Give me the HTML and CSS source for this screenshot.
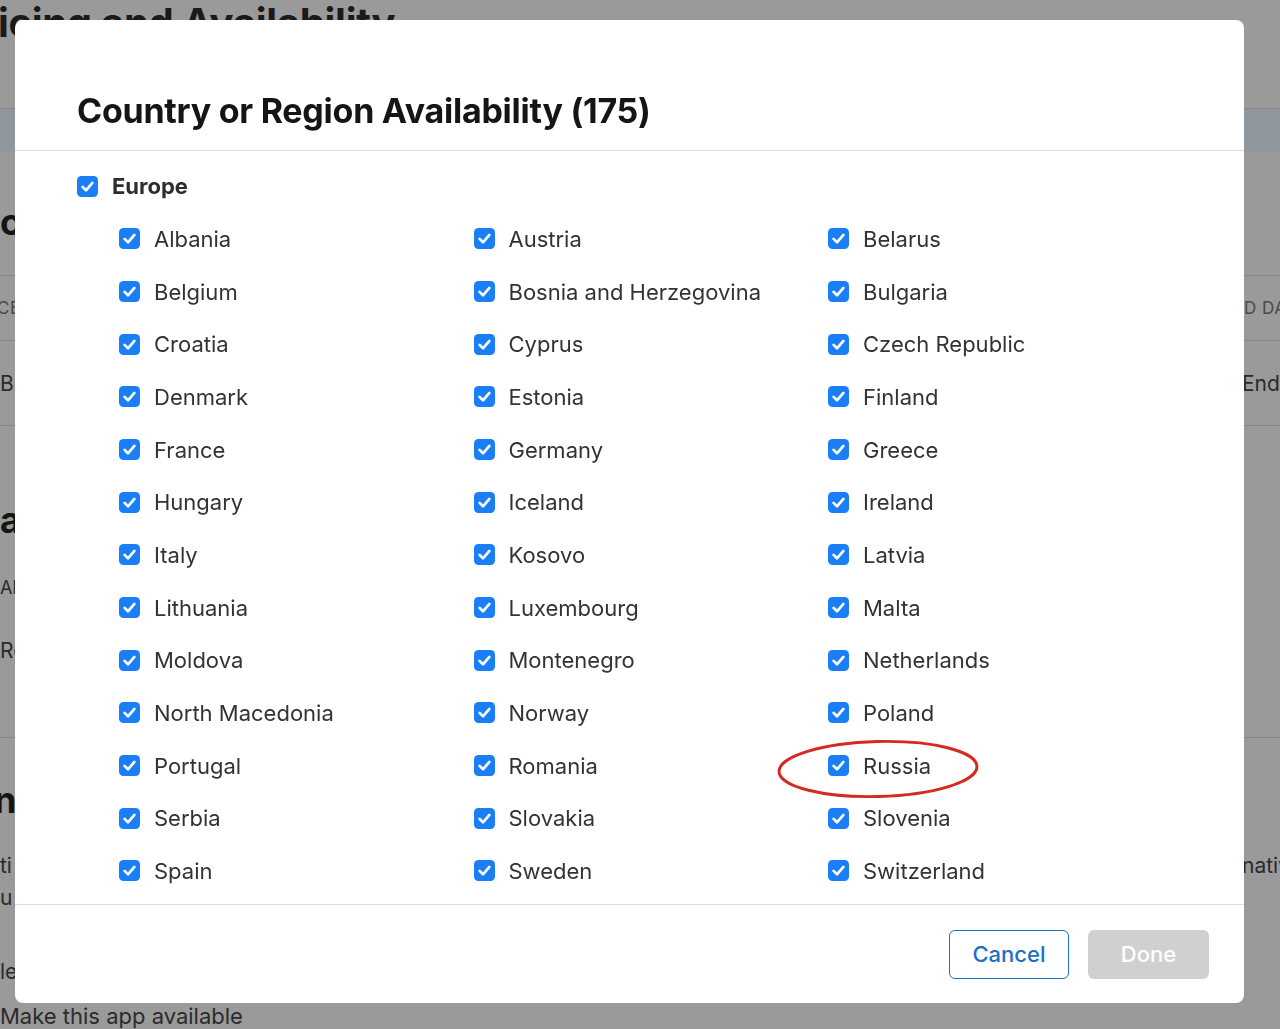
FILE: index.html
```html
<!DOCTYPE html>
<html lang="en">
<head>
<meta charset="utf-8">
<title>Country or Region Availability</title>
<link rel="stylesheet" href="styles.css">
</head>
<body>
<div class="bg">
  <div class="bg-title">Pricing and Availability</div>
  <div class="bg-gap g68"></div>
  <div class="bg-rule"></div>
  <div class="bg-band"></div>
  <div class="bg-gap g48"></div>
  <div class="bg-row h44 heading"><span class="l">ce Schedule</span></div>
  <div class="bg-gap g31"></div>
  <div class="bg-rule"></div>
  <div class="bg-row h64 caps"><span class="l shift">ICE</span><span class="r">D DATE</span></div>
  <div class="bg-rule"></div>
  <div class="bg-row h84"><span class="l">B</span><span class="r">End</span></div>
  <div class="bg-rule"></div>
  <div class="bg-gap g72"></div>
  <div class="bg-row h44 heading"><span class="l">ability</span></div>
  <div class="bg-gap g28"></div>
  <div class="bg-row h34 small"><span class="l">All</span></div>
  <div class="bg-gap g29"></div>
  <div class="bg-row h34"><span class="l">Re</span></div>
  <div class="bg-gap g70"></div>
  <div class="bg-rule"></div>
  <div class="bg-gap g40"></div>
  <div class="bg-row h44 heading"><span class="l shift2">ne</span></div>
  <div class="bg-gap g27"></div>
  <div class="bg-row h32"><span class="l">ti</span><span class="r">nativ</span></div>
  <div class="bg-row h32"><span class="l">u</span></div>
  <div class="bg-gap g42"></div>
  <div class="bg-row h32"><span class="l">le</span></div>
  <div class="bg-gap g15"></div>
  <div class="bg-row h28 make"><span class="l">Make this app available</span></div>
</div>

<div class="modal">
  <div class="modal-header">
    <h1 class="modal-title">Country or Region Availability (175)</h1>
  </div>
  <div class="modal-body">
    <label class="region">
      <svg class="cb" viewBox="0 0 21 21"><rect width="21" height="21" rx="4.5" fill="#1a7ff6"/><path d="M5.6 10.9 L9 14.3 L15.4 6.9" fill="none" stroke="#fff" stroke-width="2.7" stroke-linecap="round" stroke-linejoin="round"/></svg>
      <span>Europe</span>
    </label>
    <div class="countries" id="countries"></div>
  </div>
  <div class="modal-footer">
    <button class="btn btn-cancel">Cancel</button>
    <button class="btn btn-done">Done</button>
  </div>
</div>

<script>
  var names = ["Albania","Austria","Belarus","Belgium","Bosnia and Herzegovina","Bulgaria","Croatia","Cyprus","Czech Republic","Denmark","Estonia","Finland","France","Germany","Greece","Hungary","Iceland","Ireland","Italy","Kosovo","Latvia","Lithuania","Luxembourg","Malta","Moldova","Montenegro","Netherlands","North Macedonia","Norway","Poland","Portugal","Romania","Russia","Serbia","Slovakia","Slovenia","Spain","Sweden","Switzerland","Turkey","Ukraine","United Kingdom"];
  var box = '<svg class="cb" viewBox="0 0 21 21"><rect width="21" height="21" rx="4.5" fill="#1a7ff6"/><path d="M5.6 10.9 L9 14.3 L15.4 6.9" fill="none" stroke="#fff" stroke-width="2.7" stroke-linecap="round" stroke-linejoin="round"/></svg>';
  var ring = '<svg class="ring" viewBox="0 0 204 62"><ellipse cx="102" cy="31" rx="99" ry="27.5" transform="rotate(-1.5 102 31)" fill="none" stroke="#d42a1f" stroke-width="2.9"/></svg>';
  var html = "";
  names.forEach(function (n) {
    html += '<label class="country' + (n === "Russia" ? " marked" : "") + '">' + box + '<span>' + n + '</span>' + (n === "Russia" ? ring : "") + '</label>';
  });
  document.getElementById("countries").innerHTML = html;
</script>
</body>
</html>
```

FILE: styles.css
```css
html, body {
  margin: 0;
  padding: 0;
}
body {
  width: 1280px;
  height: 1029px;
  overflow: hidden;
  background: #9a9a9a;
  font-family: Inter, "Noto Sans", "Liberation Sans", sans-serif;
  color: #222;
}

/* dimmed page behind the sheet */
.bg {
  width: 1280px;
}
.bg-title {
  height: 40px;
  line-height: 46px;
  font-size: 40px;
  font-weight: 700;
  color: #1a1a1a;
  margin-left: -44px;
  white-space: nowrap;
  letter-spacing: -0.3px;
}
.bg-gap { width: 100%; }
.g68 { height: 68px; }
.g48 { height: 48px; }
.g31 { height: 31px; }
.g72 { height: 72px; }
.g28 { height: 28px; }
.g29 { height: 29px; }
.g70 { height: 70px; }
.g40 { height: 40px; }
.g27 { height: 27px; }
.g42 { height: 42px; }
.g15 { height: 15px; }
.bg-rule {
  height: 1px;
  background: #878787;
}
.bg-band {
  height: 43px;
  background: #8f969d;
}
.bg-row {
  display: flex;
  justify-content: space-between;
  align-items: center;
  white-space: nowrap;
  font-size: 21px;
  color: #2a2a2a;
}
.bg-row .l { margin-left: 0; }
.bg-row .r { width: 38px; overflow: hidden; }
.h44 { height: 44px; }
.h64 { height: 64px; }
.h84 { height: 84px; }
.h34 { height: 34px; }
.h32 { height: 32px; }
.h28 { height: 28px; }
.heading { font-size: 36px; font-weight: 700; color: #151515; }
.caps { font-size: 17px; color: #4a4a4a; letter-spacing: 0.5px; }
.caps .r { width: 36px; }
.bg-row .shift { margin-left: -8px; }
.bg-row .shift2 { margin-left: -6px; }
.small { font-size: 18px; }
.make { font-size: 22px; color: #2b2b2b; }

/* sheet */
.modal {
  position: fixed;
  top: 20px;
  left: 15px;
  width: 1229px;
  height: 983px;
  background: #fff;
  border-radius: 8px;
  display: flex;
  flex-direction: column;
  overflow: hidden;
}
.modal-header {
  height: 130px;
  border-bottom: 1.5px solid #dcdcdc;
  padding: 0 62px;
  display: flex;
  align-items: flex-end;
  flex-shrink: 0;
}
.modal-title {
  margin: 0 0 19px;
  font-size: 34px;
  font-weight: 700;
  color: #151515;
  letter-spacing: -0.25px;
  line-height: 40px;
}
.modal-body {
  flex: 1;
  overflow: hidden;
  padding: 9px 0 0 62px;
}
.region, .country {
  display: flex;
  align-items: center;
  gap: 14px;
  height: 52.67px;
  font-size: 22px;
  color: #333;
  white-space: nowrap;
}
.region span {
  font-weight: 700;
  color: #2d2d2d;
}
.cb {
  width: 21px;
  height: 21px;
  flex-shrink: 0;
}
.countries {
  display: grid;
  grid-template-columns: 354.5px 354.5px 354.5px;
  grid-auto-rows: 52.67px;
  margin-left: 42px;
}
.country { position: relative; }
.ring {
  position: absolute;
  left: -52px;
  top: -1px;
  width: 204px;
  height: 62px;
  pointer-events: none;
}
.modal-footer {
  height: 98px;
  flex-shrink: 0;
  border-top: 1.5px solid #dcdcdc;
  display: flex;
  justify-content: flex-end;
  align-items: center;
  gap: 19px;
  padding-right: 35px;
}
.btn {
  height: 49px;
  border-radius: 6px;
  font-family: Inter, "Noto Sans", "Liberation Sans", sans-serif;
  font-size: 22px;
  font-weight: 500;
  padding: 0;
}
.btn-cancel {
  width: 120px;
  background: #fff;
  border: 1.5px solid #1d72c8;
  color: #1d6fc3;
}
.btn-done {
  width: 121px;
  background: #d0d0d0;
  border: none;
  color: #fff;
}
```
